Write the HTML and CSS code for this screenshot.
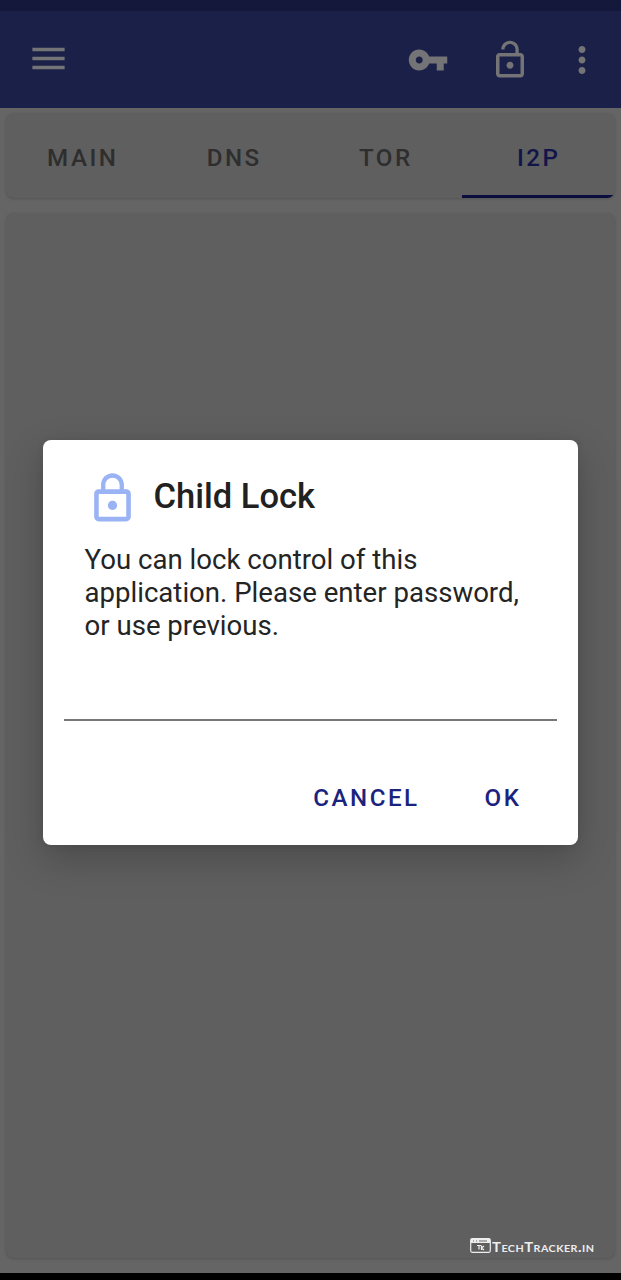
FILE: index.html
```
<!DOCTYPE html>
<html lang="en">
<head>
<meta charset="utf-8">
<title>Child Lock</title>
<link rel="stylesheet" href="styles.css">
</head>
<body>
<div class="screen">
  <div class="status-bar"></div>
  <header class="toolbar">
    <svg class="icon menu" viewBox="0 0 24 24"><path d="M3 18h18v-2H3v2zm0-5h18v-2H3v2zm0-7v2h18V6H3z"/></svg>
    <div class="actions">
      <svg class="icon" viewBox="0 0 24 24"><path d="M12.65 10C11.83 7.67 9.61 6 7 6c-3.31 0-6 2.69-6 6s2.69 6 6 6c2.61 0 4.83-1.67 5.65-4H17v4h4v-4h2v-4H12.65zM7 14c-1.1 0-2-.9-2-2s.9-2 2-2 2 .9 2 2-.9 2-2 2z"/></svg>
      <svg class="icon" viewBox="0 0 24 24"><path d="M12 17c1.1 0 2-.9 2-2s-.9-2-2-2-2 .9-2 2 .9 2 2 2zm6-9h-1V6c0-2.76-2.24-5-5-5S7 3.24 7 6h1.9c0-1.71 1.39-3.1 3.1-3.1 1.71 0 3.1 1.39 3.1 3.1v2H6c-1.1 0-2 .9-2 2v10c0 1.1.9 2 2 2h12c1.1 0 2-.9 2-2V10c0-1.1-.9-2-2-2zm0 12H6V10h12v10z"/></svg>
      <svg class="icon more" viewBox="0 0 24 24"><path d="M12 8c1.1 0 2-.9 2-2s-.9-2-2-2-2 .9-2 2 .9 2 2 2zm0 2c-1.1 0-2 .9-2 2s.9 2 2 2 2-.9 2-2-.9-2-2-2zm0 6c-1.1 0-2 .9-2 2s.9 2 2 2 2-.9 2-2-.9-2-2-2z"/></svg>
    </div>
  </header>
  <main class="content">
    <nav class="card tabs">
      <div class="tab">MAIN</div>
      <div class="tab">DNS</div>
      <div class="tab">TOR</div>
      <div class="tab active">I2P</div>
    </nav>
    <section class="card panel">
      <div class="brand">
        <svg class="brand-logo" viewBox="0 0 21 15"><rect x=".7" y=".7" width="19.6" height="13.6" rx="1.5" fill="none" stroke="currentColor" stroke-width="1.2"/><path d="M1 1h19v4H1z" fill="currentColor"/><path d="M3 3h1m2 0h1m2 0h8" stroke="#6a6a6a" stroke-width="1" fill="none"/><path d="M7 7.5h4.5M9 7.5v4M11.5 8v4M14 8l-2.5 2 2.5 2" stroke="currentColor" stroke-width="1.2" fill="none"/></svg>
        <span class="brand-name">TechTracker.in</span>
      </div>
    </section>
  </main>
  <div class="nav-bar"></div>

  <div class="dialog" role="dialog">
    <div class="dialog-head">
      <svg class="lock" viewBox="0 0 24 24"><path d="M12 17c1.1 0 2-.9 2-2s-.9-2-2-2-2 .9-2 2 .9 2 2 2zm6-9h-1V6c0-2.76-2.24-5-5-5S7 3.24 7 6v2H6c-1.1 0-2 .9-2 2v10c0 1.1.9 2 2 2h12c1.1 0 2-.9 2-2V10c0-1.1-.9-2-2-2zM8.9 6c0-1.71 1.39-3.1 3.1-3.1s3.1 1.39 3.1 3.1v2H8.9V6zM18 20H6V10h12v10z"/></svg>
      <h1 class="title">Child Lock</h1>
    </div>
    <p class="message">You can lock control of this<br>application. Please enter password,<br>or use previous.</p>
    <div class="field"></div>
    <div class="buttons">
      <span class="button">CANCEL</span>
      <span class="button">OK</span>
    </div>
  </div>
</div>
</body>
</html>
```
FILE: styles.css
```
* { box-sizing: border-box; }
body { margin: 0; font-family: Roboto, sans-serif; }
.screen {
  position: relative;
  width: 621px;
  height: 1280px;
  display: flex;
  flex-direction: column;
  background: #656565;
  overflow: hidden;
}
.status-bar { height: 11px; background: #14183b; }
.toolbar {
  height: 97px;
  display: flex;
  justify-content: space-between;
  align-items: center;
  padding: 0 18px 0 27px;
  background: #1a2047;
}
.icon { display: block; width: 42px; height: 42px; fill: #747477; }
.menu { width: 43px; height: 43px; margin-top: -2px; }
.actions { display: flex; gap: 40px; }
.more { margin-left: -10px; }
.content {
  flex: 1;
  display: flex;
  flex-direction: column;
  gap: 15px;
  padding: 5px 6px 15px;
}
.card {
  background: #5f5f5f;
  border-radius: 8px;
  box-shadow: 0 1px 3px rgba(0, 0, 0, .18);
}
.tabs {
  height: 85px;
  display: grid;
  grid-template-columns: repeat(4, 1fr);
  padding: 0 2px 0 1px;
  overflow: hidden;
}
.tab {
  display: flex;
  align-items: center;
  justify-content: center;
  padding-top: 7px;
  border-bottom: 3px solid transparent;
  font-size: 24.15px;
  font-weight: 500;
  letter-spacing: 2.5px;
  color: #2e2e2e;
}
.tab.active { padding-left: 3px; color: #11154a; border-color: #0c0d3f; }
.panel { flex: 1; display: flex; align-items: flex-end; justify-content: flex-end; padding: 0 20px 2px 0; }
.brand { display: flex; align-items: center; gap: 1px; color: #eee; }
.brand-logo { width: 21px; height: 15px; margin-top: -1px; }
.brand-name {
  width: 103px;
  padding-top: 4px;
  font: 700 12.5px/16px Lato, sans-serif;
  font-variant: small-caps;
  letter-spacing: .4px;
  white-space: nowrap;
  transform: scaleX(1.19);
  transform-origin: left;
}
.nav-bar { height: 7px; background: #000; }
.dialog {
  position: absolute;
  left: 43px;
  top: 440px;
  width: 535px;
  height: 405px;
  display: flex;
  flex-direction: column;
  padding: 30px 21px 20px;
  border-radius: 8px;
  background: #fff;
  box-shadow: 0 14px 38px rgba(0, 0, 0, .22), 0 0 8px rgba(0, 0, 0, .08);
}
.dialog-head { display: flex; align-items: center; padding-left: 20.5px; gap: 14px; height: 55px; }
.lock { width: 55px; height: 55px; margin-top: 1px; fill: #9ab3f5; }
.title { margin: -3px 0 0; font-size: 34.5px; font-weight: 500; line-height: 44px; color: #212121; }
.message { margin: 18px 0 0 20.5px; font-size: 27.6px; line-height: 33px; color: #242424; white-space: nowrap; }
.field { height: 79px; border-bottom: 2px solid #777; }
.buttons { display: flex; justify-content: flex-end; gap: 65px; padding: 62px 35.5px 0 0; }
.button { font-size: 24.15px; line-height: 30px; font-weight: 500; letter-spacing: 2.5px; color: #1a237e; }
```
